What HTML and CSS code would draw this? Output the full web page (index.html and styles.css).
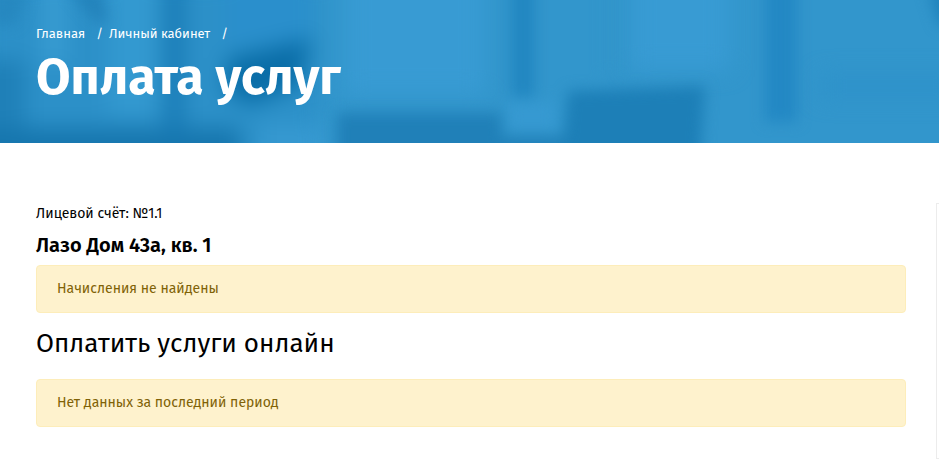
FILE: index.html
```html
<!DOCTYPE html>
<html lang="ru">
<head>
<meta charset="utf-8">
<meta name="viewport" content="width=device-width, initial-scale=1">
<title>Оплата услуг</title>
<link rel="stylesheet" href="styles.css">
</head>
<body>
<header class="hero">
  <svg class="hero-art" viewBox="0 0 939 143" preserveAspectRatio="none" aria-hidden="true">
    <defs>
      <filter id="soft" filterUnits="userSpaceOnUse" x="-60" y="-60" width="1060" height="270" color-interpolation-filters="sRGB"><feGaussianBlur stdDeviation="7"/></filter>
      <filter id="wide" filterUnits="userSpaceOnUse" x="-60" y="-60" width="1060" height="270" color-interpolation-filters="sRGB"><feGaussianBlur stdDeviation="11"/></filter>
    </defs>
    <rect width="939" height="143" fill="#3296cc"/>
    <g filter="url(#wide)">
      <rect x="-20" y="-20" width="340" height="190" fill="#2c90c8"/>
      <rect x="-30" y="60" width="55" height="100" fill="#1f80b8"/>
      <rect x="42" y="-30" width="24" height="95" fill="#389cd2"/>
      <rect x="108" y="-30" width="48" height="145" fill="#3399d0"/>
      <rect x="-20" y="128" width="260" height="50" fill="#1676ae"/>
      <rect x="225" y="-30" width="85" height="75" fill="#2a8fcc"/>
      <path d="M228 58L312 38L300 85L250 105L225 90Z" fill="#0a6da7"/>
      <rect x="166" y="-30" width="16" height="170" fill="#1577b2"/>
      <rect x="345" y="-30" width="140" height="125" fill="#389bd3"/>
      <rect x="630" y="-30" width="100" height="100" fill="#389bd3"/>
      <rect x="820" y="75" width="140" height="22" fill="#2e92ca"/>
      <rect x="260" y="125" width="65" height="40" fill="#3699d1"/>
    </g>
    <g filter="url(#soft)">
      <path d="M-10 -10H28L16 25H-10Z" fill="#2484bc" fill-opacity=".7"/>
      <path d="M68 -10H100L108 20L98 24Z" fill="#2080b8" fill-opacity=".8"/>
      <rect x="337" y="113" width="165" height="60" fill="#2080b8"/>
      <rect x="512" y="-20" width="22" height="117" fill="#2186c0"/>
      <rect x="604" y="-20" width="12" height="95" fill="#3295ca"/>
      <rect x="508" y="102" width="48" height="28" fill="#3699d1"/>
      <path d="M568 91L705 86L699 175H560Z" fill="#1d7fb7"/>
      <rect x="765" y="-20" width="32" height="142" fill="#2388c4"/>
      <path d="M928 -10H960V30L939 24Z" fill="#1f82bb"/>
      <rect x="500" y="136" width="65" height="30" fill="#2181b9"/>
    </g>
  </svg>
  <nav class="crumbs" aria-label="Навигация">
    <a href="#">Главная</a><span class="slash">/</span>
    <a href="#">Личный кабинет</a><span class="slash">/</span>
  </nav>
  <h1>Оплата услуг</h1>
</header>
<div class="page">
  <main class="content">
    <p class="account">Лицевой счёт: №1.1</p>
    <h2 class="address">Лазо Дом 43а, кв. 1</h2>
    <div class="alert">Начисления не найдены</div>
    <h2 class="section-title">Оплатить услуги онлайн</h2>
    <div class="alert">Нет данных за последний период</div>
  </main>
  <aside class="sidebar"></aside>
</div>
</body>
</html>
```

FILE: styles.css
```css
* {
  box-sizing: border-box;
}

body {
  margin: 0;
  overflow-x: hidden;
  background: #fff;
  color: #000;
  font-family: "Fira Sans", "Noto Sans", sans-serif;
  font-size: 14px;
  line-height: 20px;
}

h1,
h2,
p {
  margin: 0;
}

.hero {
  position: relative;
  padding: 24px 36px 33px;
  overflow: hidden;
  background: #3296cc;
  color: #fff;
}

.hero-art {
  position: absolute;
  inset: 0;
  z-index: 0;
  width: 100%;
  height: 100%;
}

.crumbs,
.hero h1 {
  position: relative;
  z-index: 1;
}

.crumbs {
  display: flex;
  font-size: 13px;
}

.crumbs a {
  color: inherit;
  text-decoration: none;
}

.slash {
  margin: 0 6px 0 11px;
}

.hero h1 {
  font-size: 50px;
  font-weight: 700;
  line-height: 66px;
}

.page {
  display: flex;
  gap: 30px;
  padding: 60px 0 15px 36px;
}

.content {
  flex: 1;
  min-width: 0;
  padding-bottom: 32px;
}

.account {
  line-height: 22px;
}

.address {
  margin: 8px 0;
  font-size: 20px;
  font-weight: 600;
  line-height: 24px;
}

.alert {
  padding: 13px 20px;
  border: 1px solid #fdedba;
  border-radius: 4px;
  background: #fef2cd;
  color: #806206;
}

.section-title {
  margin: 15px 0 19px;
  font-size: 26px;
  font-weight: 400;
  line-height: 32px;
}

.sidebar {
  width: 3px;
  border: 1px solid #ececec;
  border-right: 0;
}
```
